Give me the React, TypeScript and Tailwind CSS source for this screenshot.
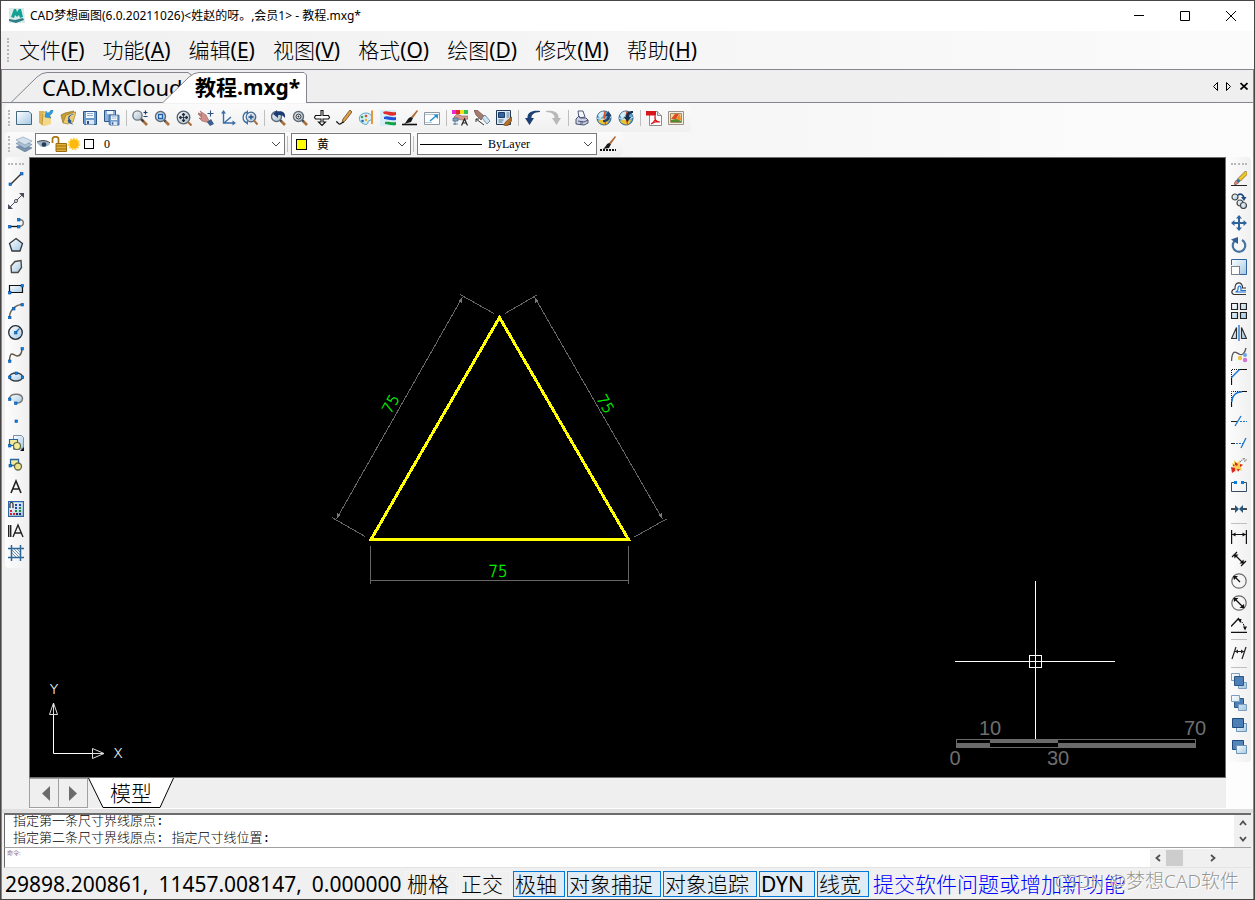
import type { ReactNode } from "react";
import clsx from "clsx";

type Tool = { label: string; art: ReactNode };

const menus = [
  { name: "文件", key: "F" },
  { name: "功能", key: "A" },
  { name: "编辑", key: "E" },
  { name: "视图", key: "V" },
  { name: "格式", key: "O" },
  { name: "绘图", key: "D" },
  { name: "修改", key: "M" },
  { name: "帮助", key: "H" }
];

const modes = [
  { name: "栅格", on: false, width: "w-[52px]" },
  { name: "正交", on: false, width: "w-[52px]" },
  { name: "极轴", on: true, width: "w-[52px]" },
  { name: "对象捕捉", on: true, width: "w-[94px]" },
  { name: "对象追踪", on: true, width: "w-[94px]" },
  { name: "DYN", on: true, width: "w-14" },
  { name: "线宽", on: true, width: "w-[52px]" }
];

// small blue grip squares used by the drawing tools
function Dots({ at }: { at: [number, number][] }) {
  return (
    <>
      {at.map(([x, y]) => (
        <rect
          key={`${x}-${y}`}
          x={x - 1}
          y={y - 1}
          width="2.5"
          height="2.5"
          fill="#0a84e8"
          stroke="#0a4f9c"
          strokeWidth=".6"
        />
      ))}
    </>
  );
}

function Lens({ children }: { children?: ReactNode }) {
  return (
    <>
      <path d="M10 10l2 2" stroke="#3b3f45" strokeWidth="2.4" />
      <path d="M11.5 11.5l3.5 3.5" stroke="#a8703c" strokeWidth="2.6" />
      <circle cx="6.5" cy="6.5" r="5" fill="url(#glass)" stroke="#5d6b78" strokeWidth="1.4" />
      {children}
    </>
  );
}

function Globe() {
  return (
    <>
      <circle cx="8" cy="8" r="7" fill="#5fa3d0" stroke="#2b5d86" />
      <path d="M2 5c2-4 6-4 7-3L7 6 4 9z" fill="#d3ebf7" />
      <path d="M2 11l5-3 6 2-2 4c-3 1-7 0-9-3z" fill="#e8c530" />
      <path d="M9 1c-1 5-1 10 1 14" stroke="#d6502c" strokeWidth="1.4" fill="none" />
      <path d="M1 8c4 2 9 2 14-1" stroke="#d9ecf7" fill="none" />
    </>
  );
}

function Floppy() {
  return (
    <>
      <path d="M1.5 1.5h13v13h-12l-1-1z" fill="#6d9bcb" stroke="#2d578c" />
      <path d="M4 2h8v6H4z" fill="#f4f8fc" />
      <path d="M5 3.5h6M5 5.5h6" stroke="#8fb0d2" />
      <path d="M4 10h8v4.5H4z" fill="#dbe7f3" />
      <path d="M5 11h2v3H5z" fill="#2d578c" />
    </>
  );
}

const fileTools: Tool[] = [
  {
    label: "新建",
    art: <path d="M.5 1.5h12.5l2.5 2.5v10.5h-15z" fill="url(#sky)" stroke="#42677f" />
  },
  {
    label: "打开",
    art: (
      <>
        <path d="M1 1h5l1 1v13H4l-3-2z" fill="#dcb552" />
        <path d="M5 3h8v11l-6 2H4z" fill="#f3d88b" />
        <path d="M4 15l1-11" stroke="#c4983a" />
        <path d="M15 0c0 3-2 5-4 5l2 3-6-1 1-6 1 2c2 0 3-1 4-3z" fill="#2f9bdc" stroke="#1a76b5" strokeWidth=".5" />
      </>
    )
  },
  {
    label: "打开图库",
    art: (
      <>
        <path d="M1 5l4-2 9-2-2 3-9 9z" fill="#c79d35" stroke="#8d6b1c" strokeWidth=".7" />
        <path d="M3 13l3-8 10-3-3 10-5 2z" fill="#f0cd6c" stroke="#a27c22" strokeWidth=".7" />
        <path d="M14 4c-4 0-7 2-6 6l-1-1 1 4 6 2-3-3 1-1-2-2c-1-2 1-4 4-4z" fill="#315a86" stroke="#f4f4f4" strokeWidth=".4" />
      </>
    )
  },
  { label: "保存", art: <Floppy /> },
  {
    label: "全部保存",
    art: (
      <>
        <path d="M.5.5h11v11H.5z" fill="#8fb3d8" stroke="#2d578c" />
        <path d="M3 1h6v3H3z" fill="#eef4fa" />
        <g transform="translate(4 4) scale(.76)">
          <Floppy />
        </g>
      </>
    )
  }
];

const viewTools: Tool[] = [
  {
    label: "缩放",
    art: (
      <>
        <path d="M9 9l6 6" stroke="#a8703c" strokeWidth="2.6" />
        <path d="M8.5 8.5l3 3" stroke="#3b3f45" strokeWidth="2" />
        <circle cx="5.5" cy="5.5" r="4.6" fill="url(#glass)" stroke="#6b7883" strokeWidth="1.4" />
        <path d="M11.5 2.5h4M13.5.5v4M11.5 6.5h4" stroke="#1e3f66" strokeWidth="1.2" />
      </>
    )
  },
  {
    label: "窗口缩放",
    art: (
      <Lens>
        <path d="M4.5 4.5h4v4h-4z" fill="#dcecfa" stroke="#1b5fae" strokeWidth="1.3" />
      </Lens>
    )
  },
  {
    label: "范围缩放",
    art: (
      <>
        <circle cx="7.5" cy="7.5" r="6.3" fill="url(#glass)" stroke="#55626e" strokeWidth="1.3" />
        <path d="M12 12l3.5 3.5" stroke="#a8703c" strokeWidth="2" />
        <path d="M3 7.5h9M7.5 3v9M3 7.5l2-1.5v3zM12 7.5l-2-1.5v3zM7.5 3L6 5h3zM7.5 12L6 10h3z" stroke="#1d2733" fill="#1d2733" strokeWidth=".8" />
      </>
    )
  },
  {
    label: "平移",
    art: (
      <>
        <path d="M0 3l4 1-2-3 6 4 2 4 3 4-5-1-4-1-3-3 3 0-4-4 4 2z" fill="#cf8f8a" stroke="#98605c" strokeWidth=".6" />
        <path d="M9 12l4-3 3 5-4 2z" fill="#3c5f8f" />
        <path d="M12.5.5v6M9.500 3.5h6" stroke="#2b5288" strokeWidth="1.1" />
      </>
    )
  },
  {
    label: "坐标系",
    art: (
      <>
        <path d="M3.5 2v11h10M4 13l7-6" stroke="#3a6ea8" strokeWidth="1.4" fill="none" />
        <path d="M3.5 0l2.5 3.5H1zM16 13l-3.500 2.5v-5z" fill="#3a6ea8" />
      </>
    )
  },
  {
    label: "动态缩放",
    art: (
      <>
        <path d="M4 2C0 5 0 11 5 13" stroke="#3a6ea8" strokeWidth="1.3" fill="none" />
        <path d="M6 0v4L3 3zM6 15v-4l-3 1z" fill="#3a6ea8" />
        <circle cx="9" cy="7" r="4.8" fill="url(#glass)" stroke="#41648c" strokeWidth="1.2" />
        <path d="M6.5 7h5M9 4.5v5" stroke="#1b4f92" strokeWidth="1.3" />
        <path d="M12 10.5l3.5 4" stroke="#a8703c" strokeWidth="2" />
      </>
    )
  }
];

const editTools: Tool[] = [
  {
    label: "上一视图",
    art: (
      <Lens>
        <path d="M15 8c1-5-3-8-8-6V0L3 4l5 4V5.500c3-1 5 0 7 2.500z" fill="#1c3c74" />
      </Lens>
    )
  },
  {
    label: "实时查看",
    art: (
      <Lens>
        <circle cx="6.5" cy="6.5" r="2.5" fill="#f0f0f0" stroke="#2e3338" />
        <circle cx="6.5" cy="6.5" r="1" fill="#2e3338" />
      </Lens>
    )
  },
  {
    label: "实时平移",
    art: (
      <path
        d="M7 .5h2v5h5.500l1 2-1 1.500H9v3h2.500L8 15.500 4.500 12H7V9H1.500l-1-1.500 1-2H7z"
        fill="#fff"
        stroke="#111"
        strokeWidth="1.1"
      />
    )
  },
  {
    label: "草图",
    art: (
      <>
        <path d="M14 0l2 2-7 9-3 2 1-4z" fill="#e2a04a" stroke="#5f431f" strokeWidth=".8" />
        <path d="M0 12c2-1 2 3 4 2s1-1 4-2" stroke="#111" strokeWidth="1.3" fill="none" />
      </>
    )
  },
  {
    label: "颜色",
    art: (
      <>
        <path d="M8 3c5 0 7 4 5 7-1 1-3 0-3 2s-1 3-4 2C-1 12 0 3 8 3z" fill="#d5eef7" stroke="#5ba6c8" />
        <circle cx="4" cy="7" r="1.3" fill="#3fa65a" />
        <circle cx="8" cy="6" r="1.3" fill="#d44c3a" />
        <circle cx="4.5" cy="11" r="1.3" fill="#2b64bd" />
        <circle cx="8" cy="10" r="1.2" fill="#e4b81e" />
        <path d="M13 1l2-1v14h-2z" fill="#e8963a" />
      </>
    )
  },
  {
    label: "图层",
    art: (
      <>
        <path d="M0 0h16v16H0z" fill="#d8edf5" />
        <path d="M3 2c4-2 7 1 13 0v3c-6 2-8-1-12-1z" fill="#e22b2b" />
        <path d="M4 7c4-2 6 1 12 0v3c-6 1-8-1-12-1z" fill="#1f52d8" />
        <path d="M5 12c4-1 6 1 11 0v3c-5 1-7-1-11-1z" fill="#15a043" />
      </>
    )
  },
  {
    label: "格式刷",
    art: (
      <>
        <path d="M15 0l1 1-5 7-2-1z" fill="#b26a33" />
        <path d="M9 7l2 1-2 4-7 2c3-2 3-6 7-7z" fill="#17191d" />
        <path d="M0 14.5h15" stroke="#111" strokeWidth="1.6" />
      </>
    )
  },
  {
    label: "视口",
    art: (
      <>
        <path d="M.5 2.5h15v12H.5z" fill="#fff" stroke="#8b99a6" />
        <path d="M1 4.5h14M1 12.5h7" stroke="#b9c4ce" />
        <path d="M6 11l6-5" stroke="#2092dc" strokeWidth="1.6" />
        <path d="M9.5 4.5H14V9z" fill="#2092dc" />
      </>
    )
  }
];

const styleTools: Tool[] = [
  {
    label: "文字样式",
    art: (
      <>
        <path d="M0 0h4v4H0z" fill="#e32bd0" />
        <path d="M4 0h4v4H4z" fill="#e62626" />
        <path d="M8 0h4v4H8z" fill="#f2df25" />
        <path d="M12 0h4v4h-4z" fill="#31c24a" />
        <path d="M5 4l5 2 6 0v3l-6 1-5-1-3-2z" fill="#d79a90" stroke="#8d5a52" strokeWidth=".6" />
        <path d="M1 8h5v3H1zM3 11v4M1 14h5" fill="#7fa6c9" stroke="#44698d" strokeWidth=".8" />
        <path d="M9.5 15.5L12.5 9l3 6.500M10.500 13h4" stroke="#222" strokeWidth="1.2" fill="none" />
      </>
    )
  },
  {
    label: "清理",
    art: (
      <>
        <path d="M0 0h3l7 6-3 4-5-5z" fill="#a77a70" stroke="#6d4a43" strokeWidth=".7" />
        <path d="M8 8l3-3 5 6-3 3z" fill="#cfe3f2" stroke="#5c7c96" strokeWidth=".8" />
        <path d="M2 9l8 6M2 9l0 3M2 9l3 0" stroke="#333" fill="none" />
      </>
    )
  },
  {
    label: "样式另存",
    art: (
      <>
        <path d="M.5.5h14v14H.5z" fill="#dce8f3" stroke="#203a58" />
        <path d="M2.5 2.5h6v5h-6z" fill="#33659e" stroke="#1b3c63" />
        <path d="M10.5 3h3M10.500 5h3M10.500 7h3M2.500 10h5M2.500 12h4" stroke="#55708c" />
        <path d="M15.500 7v4l-4 5-4-1 3-4z" fill="#b66f27" stroke="#7a4412" strokeWidth=".7" />
      </>
    )
  }
];

const historyTools: Tool[] = [
  {
    label: "撤销",
    art: <path d="M16 1C9 0 3 2 3.500 8H1l4.500 7L10 8H7.500C7 5 10 2 16 2z" fill="#1c3f74" />
  },
  {
    label: "重做",
    art: <path d="M0 1c7-1 13 1 12.500 7H15l-4.500 7L6 8h2.500C9 5 6 2 0 2z" fill="#b9b9b9" />
  }
];

const outputTools: Tool[] = [
  {
    label: "打印",
    art: (
      <>
        <path d="M4 1l5 0 2 6-6 1z" fill="#f2f4f9" stroke="#535b7c" />
        <path d="M2 9l3-3 1 2h6l2 2v3l-4 2-8-1z" fill="#ccd2e2" stroke="#474f70" />
        <path d="M4 11l6 1 4-2M6 13h3" stroke="#474f70" fill="none" />
      </>
    )
  },
  {
    label: "网络打开",
    art: (
      <>
        <Globe />
        <path d="M7 12c5 0 7-2 7-6h1.500L12.500 1 9 6h2.500c0 2-2 4-4.500 4z" fill="#22456f" />
      </>
    )
  },
  {
    label: "网络保存",
    art: (
      <>
        <Globe />
        <path d="M15 1C10 1 8 3 8 7H6l3.500 5L13 7h-2c0-2 1-4 4-4z" fill="#17304f" />
      </>
    )
  }
];

const exportTools: Tool[] = [
  {
    label: "输出PDF",
    art: (
      <>
        <path d="M3.5 1.5h8l4 4v10h-12z" fill="#fff" stroke="#8c8c8c" />
        <path d="M11.5 1.5v4h4" fill="#ddd" stroke="#8c8c8c" />
        <path d="M0 1h10v4.500H0z" fill="#d9151c" />
        <path d="M5 14c3-2 5-5 4-8-1 4 2 6 5 6-3-1-6 0-9 2z" fill="none" stroke="#d9151c" strokeWidth="1.1" />
      </>
    )
  },
  {
    label: "输出图片",
    art: (
      <>
        <path d="M.5 1.5h15v13H.5z" fill="#f2eee8" stroke="#9b9389" />
        <path d="M2.5 3.5h11v9h-11z" fill="#f1d9a4" stroke="#a78d5f" />
        <path d="M3 9l4-5 4 0-3 5z" fill="#dd4a25" />
        <path d="M8 9l4-5 1 6-3 1z" fill="#ef8c22" />
        <path d="M3 10l5-1 5 2v1H3z" fill="#4e8d32" />
      </>
    )
  }
];

const brush = (
  <>
    <path d="M15 0l1 1-5 7-2-1z" fill="#b26a33" />
    <path d="M9 7l2 1-2 4-6 1c3-2 3-5 6-6z" fill="#17191d" />
    <path d="M0 14h16" stroke="#111" strokeWidth="2" strokeDasharray="2 1" />
  </>
);

const drawTools: Tool[] = [
  {
    label: "直线",
    art: (
      <>
        <path d="M2.5 13.5l11-11" stroke="#37342c" strokeWidth="1.4" />
        <Dots at={[[2, 13], [13.5, 2.5]]} />
      </>
    )
  },
  {
    label: "构造线",
    art: (
      <>
        <path d="M1 15L15 1" stroke="#4c4a5c" />
        <path d="M0 16v-5l5 5zM16 0v5l-5-5z" fill="#4c4a5c" />
        <circle cx="8" cy="8" r="1.5" fill="#fff" stroke="#4c4a5c" />
      </>
    )
  },
  {
    label: "多段线",
    art: (
      <>
        <path d="M1 11.5h10" stroke="#111" strokeWidth="1.3" />
        <path d="M10 4.5c7-1 7 7 1 7" stroke="#7b7b7b" strokeWidth="1.5" fill="none" />
        <Dots at={[[1.5, 11.5], [10.5, 4.5], [10.5, 11.5]]} />
      </>
    )
  },
  {
    label: "正多边形",
    art: <path d="M8 1.5l6.500 5-2.500 7.500H4L1.500 6.500z" fill="url(#sky)" stroke="#333a40" strokeWidth="1.3" />
  },
  {
    label: "面域",
    art: <path d="M7 2.500l6-1 .5 7L10 13.500H3.500L3 7z" fill="url(#sky)" stroke="#4b4b4b" strokeWidth="1.4" />
  },
  {
    label: "矩形",
    art: (
      <>
        <path d="M1.5 4.5h13v7h-13z" fill="url(#sky)" stroke="#111" strokeWidth="1.2" />
        <Dots at={[[1.5, 11.5], [14, 4.5]]} />
      </>
    )
  },
  {
    label: "圆弧",
    art: (
      <>
        <path d="M1.5 14C2 7 7 2 14 1.500" stroke="#6b6357" strokeWidth="1.5" fill="none" />
        <Dots at={[[1.5, 14.5], [5.5, 5.5], [14, 1.5]]} />
      </>
    )
  },
  {
    label: "圆",
    art: (
      <>
        <circle cx="7.5" cy="7.5" r="6.8" fill="url(#sky)" stroke="#222a33" strokeWidth="1.3" />
        <path d="M7.5 7.5l4-4" stroke="#2b6cab" strokeWidth="1.3" />
        <Dots at={[[7.5, 7.5]]} />
      </>
    )
  },
  {
    label: "样条曲线",
    art: (
      <>
        <path d="M1.5 14C2 2 6 9 9 9s5-2 5-8" stroke="#5e5748" strokeWidth="1.4" fill="none" />
        <Dots at={[[1.5, 14], [14, 1.5]]} />
      </>
    )
  },
  {
    label: "椭圆",
    art: (
      <>
        <ellipse cx="8" cy="8" rx="6.5" ry="4" fill="url(#sky)" stroke="#37424c" strokeWidth="1.4" />
        <Dots at={[[1.5, 8], [14.5, 8], [8, 4]]} />
      </>
    )
  },
  {
    label: "椭圆弧",
    art: (
      <>
        <path d="M1.5 7C3 2 14 2 14.500 7.500c0 3-3 5-7 4.500" stroke="#777" strokeWidth="1.5" fill="url(#sky)" />
        <Dots at={[[1.5, 8], [7.5, 12]]} />
      </>
    )
  },
  { label: "点", art: <Dots at={[[8, 8]]} /> },
  {
    label: "创建块",
    art: (
      <>
        <path d="M5.5.5h8l2 2v10l-4 2h-6z" fill="url(#sky)" stroke="#7591a8" />
        <path d="M1.5 4.5h8v6h-8z" fill="#f3ea9c" stroke="#29629d" strokeWidth="1.2" />
        <circle cx="9" cy="11" r="3.5" fill="#f3ea9c" stroke="#626744" strokeWidth="1.2" />
        <path d="M16 12v4h-4z" fill="#111" />
        <Dots at={[[1.5, 10.5]]} />
      </>
    )
  },
  {
    label: "插入块",
    art: (
      <>
        <path d="M2.5 2.5h8v6h-8z" fill="#f3ea9c" stroke="#29629d" strokeWidth="1.3" />
        <circle cx="10" cy="9.5" r="3.5" fill="#e8e38d" stroke="#626744" strokeWidth="1.3" />
        <Dots at={[[2, 8.5]]} />
      </>
    )
  },
  {
    label: "单行文字",
    art: <path d="M3 14L8 2l5 12M5 10h6" stroke="#222" strokeWidth="1.6" fill="none" />
  },
  {
    label: "图案填充",
    art: (
      <>
        <path d="M.5.5h15v15H.5z" fill="url(#sky)" stroke="#2d68a8" strokeWidth="1.3" />
        <path d="M2 7V3c0-2 3-2 3 0v4" stroke="#222" strokeWidth="1.2" fill="none" />
        <path d="M7 4h2M11 4h2M7 7h2" stroke="#1f3fc2" strokeWidth="2" />
        <path d="M11 7h2M7 10h2M11 10h2" stroke="#1d8b3a" strokeWidth="2" />
        <path d="M2 10h2M2 13h2M5 13h2" stroke="#e52222" strokeWidth="2" />
        <path d="M8 13h2M11 13h2" stroke="#252a72" strokeWidth="2" />
      </>
    )
  },
  {
    label: "多行文字",
    art: (
      <path d="M.7 2v12M2.7 2v12M5 14l5-12 5 12M7 10h6" stroke="#222" strokeWidth="1.4" fill="none" />
    )
  },
  {
    label: "剖面线",
    art: (
      <>
        <path d="M3.5 0v16M12.500 0v16M0 3.500h16M0 12.500h16" stroke="#2d6698" strokeWidth="1.5" />
        <path d="M4 8l4 4M4 5l7 7M6 4l6 6M9 4l3 3" stroke="#6c8fae" />
      </>
    )
  }
];

const modifyTools: Tool[] = [
  {
    label: "删除",
    art: (
      <>
        <path d="M0 14.5h16" stroke="#222" />
        <path d="M14.500 0L16 1.500v2L9.500 10 7 7.500z" fill="#f0c52b" stroke="#80671a" strokeWidth=".8" />
        <path d="M7 7.500L9.500 10l-2 2L5 9.500z" fill="#3377a8" />
        <path d="M5 9.500L7.500 12 5 13.500H3.500V12z" fill="#e58d7b" stroke="#824a40" strokeWidth=".7" />
      </>
    )
  },
  {
    label: "复制",
    art: (
      <>
        <circle cx="4" cy="4" r="3" fill="url(#sky)" stroke="#444" strokeWidth="1.2" />
        <circle cx="9" cy="10" r="3" fill="url(#sky)" stroke="#444" strokeWidth="1.2" />
        <circle cx="12.5" cy="12.5" r="3" fill="url(#sky)" stroke="#444" strokeWidth="1.2" />
        <path d="M7 2c3-2 6 0 6 4" stroke="#1e4a80" strokeWidth="1.6" fill="none" />
        <path d="M10 4h5.500L13 8z" fill="#1e4a80" />
      </>
    )
  },
  {
    label: "移动",
    art: (
      <>
        <path d="M8 2v12M2 8h12" stroke="#2f659c" strokeWidth="2" />
        <path d="M8 0l3 3.500H5zM8 16l3-3.500H5zM0 8l3.500-3v6zM16 8l-3.500-3v6z" fill="#2f659c" />
      </>
    )
  },
  {
    label: "旋转",
    art: (
      <>
        <path d="M5 3a6.3 6.3 0 1 0 6 0" stroke="#4573a3" strokeWidth="2.2" fill="none" />
        <path d="M0 2.500L7 0v7z" fill="#2f5f94" />
      </>
    )
  },
  {
    label: "缩放对象",
    art: (
      <>
        <path d="M.5.5h15v15H.5z" fill="url(#sky)" />
        <path d="M.5 6V.5h15v15H9" fill="none" stroke="#2f659c" />
        <path d="M.5 7.5h8v8h-8z" fill="#fff" stroke="#111" strokeDasharray="1 1" />
      </>
    )
  },
  {
    label: "偏移",
    art: (
      <>
        <path d="M15 13.500H3c-3-1-3-5 1-5.500C3 0 12 0 11.500 7H15" fill="none" stroke="#333" strokeWidth="1.2" />
        <path d="M15 11H5c0-1 2 0 2-3 0-4 3-4 3 0v1.500h5" fill="none" stroke="#1a73cf" strokeWidth="1.2" />
      </>
    )
  },
  {
    label: "阵列",
    art: (
      <path
        d="M.5.5h6v6h-6zM9.500.5h6v6h-6zM.5 9.500h6v6h-6zM9.500 9.500h6v6h-6z"
        fill="url(#sky)"
        stroke="#222"
        strokeWidth="1.2"
      />
    )
  },
  {
    label: "镜像",
    art: (
      <>
        <path d="M5.5 2.5v11h-5zM10.500 2.500v11h5z" fill="url(#sky)" stroke="#333" strokeWidth="1.2" />
        <path d="M8 0v16" stroke="#1a73cf" strokeWidth="1.3" />
      </>
    )
  },
  {
    label: "编辑曲线",
    art: (
      <>
        <path d="M.5 14C1 2 5 5 8 7s6-1 7-6" stroke="#555" strokeWidth="1.3" fill="none" />
        <circle cx="9" cy="11" r="2.2" fill="#eac44a" />
        <circle cx="14" cy="8" r="2" fill="#6ca6e8" />
        <circle cx="14" cy="13" r="2.2" fill="#d672d8" />
      </>
    )
  },
  {
    label: "倒角",
    art: (
      <>
        <path d="M.5 8V.5H9" stroke="#111" strokeDasharray="1 1" fill="none" />
        <path d="M.5 16V8.500M8 .5h8" stroke="#111" strokeWidth="1.2" />
        <path d="M.5 8.500l8-8" stroke="#1a73cf" strokeWidth="1.4" />
      </>
    )
  },
  {
    label: "圆角",
    art: (
      <>
        <path d="M.5 9V.5H10" stroke="#111" strokeDasharray="1 1" fill="none" />
        <path d="M.5 16v-5M11 .5h5" stroke="#111" strokeWidth="1.2" />
        <path d="M.7 11C1 5 5 1 11 .7" stroke="#1a73cf" strokeWidth="1.7" fill="none" />
      </>
    )
  },
  {
    label: "修剪",
    art: (
      <>
        <path d="M0 8.500h6" stroke="#222" />
        <path d="M9 8.500h7" stroke="#1a73cf" strokeDasharray="2 1" />
        <path d="M4 13l6-10" stroke="#1a73cf" strokeWidth="1.3" />
      </>
    )
  },
  {
    label: "延伸",
    art: (
      <>
        <path d="M0 8.500h4" stroke="#222" />
        <path d="M5 8.500h7" stroke="#1a73cf" strokeDasharray="2 1" />
        <path d="M10 13l5-10" stroke="#1a73cf" strokeWidth="1.3" />
      </>
    )
  },
  {
    label: "分解",
    art: (
      <>
        <path d="M9 5l4-4 1 3 2-2" stroke="#777" strokeWidth="1.3" strokeDasharray="1 1" fill="none" />
        <path d="M1 6l2 1 0-4 3 3 3-3 0 4 3 0-2 3 1 4-4-2-3 3-1-3-2 1 1-3z" fill="#f6cf52" />
        <path d="M0 10l4 1 0 3-3 2zM4 5l3 2-1 2-2-1zM9 7l3 1-3 2zM6 12l3 0-2 3zM2 7l2 2-2 0z" fill="#da2525" />
      </>
    )
  },
  {
    label: "打断",
    art: (
      <>
        <path d="M5 3.500H.5v9h15v-9H11" fill="none" stroke="#384b61" />
        <path d="M3 2h3v3H3zM10 2h3v3h-3z" fill="#0a7be0" />
      </>
    )
  },
  {
    label: "合并",
    art: (
      <>
        <path d="M0 8h5M11 8h5" stroke="#111" strokeWidth="1.5" />
        <path d="M4 4l4 4-4 4zM12 4L8 8l4 4z" fill="#25567f" />
      </>
    )
  }
];

const dimTools: Tool[] = [
  {
    label: "线性标注",
    art: (
      <>
        <path d="M.6 1v14M15.4 1v14M1 5.500h14" stroke="#111" strokeWidth="1.2" />
        <path d="M1 5.500L4.500 3.500v4zM15 5.500l-3.500-2v4z" fill="#111" />
      </>
    )
  },
  {
    label: "对齐标注",
    art: (
      <>
        <path d="M1 6l5-5M10 15l5-5M3.500 3.500l9 9" stroke="#111" strokeWidth="1.2" />
        <path d="M3 3.500h4.500L3.500 7.500zM13 12.500H8.500l4-4z" fill="#111" />
      </>
    )
  },
  {
    label: "半径标注",
    art: (
      <>
        <circle cx="8" cy="8" r="7.200" fill="none" stroke="#6b6b6b" strokeWidth="1.2" />
        <path d="M3 3l6 6" stroke="#111" strokeWidth="1.3" />
        <path d="M2 3l5 0-4 4z" fill="#111" />
      </>
    )
  },
  {
    label: "直径标注",
    art: (
      <>
        <circle cx="8" cy="8" r="7.200" fill="none" stroke="#6b6b6b" strokeWidth="1.2" />
        <path d="M3 3l10 10" stroke="#111" strokeWidth="1.3" />
        <path d="M2.5 3l5 0-4.500 4zM13.500 13l-5 0 4.500-4z" fill="#111" />
      </>
    )
  },
  {
    label: "角度标注",
    art: (
      <>
        <path d="M0 15.300h16M0 9.500l8-8.500" stroke="#111" strokeWidth="1.3" />
        <path d="M8 3c4 2 5 5 6 9" stroke="#111" strokeDasharray="2 1" fill="none" />
        <path d="M6.500 2l4 0-1 4zM12 9.500h4l-2 4z" fill="#111" />
      </>
    )
  }
];

const editDimTools: Tool[] = [
  {
    label: "编辑标注",
    art: (
      <>
        <path d="M1 14L5 2M11 14l4-12M4 6.500h9" stroke="#222" strokeWidth="1.2" />
        <path d="M4 6.500l3-2v4zM13 6.500l-3-2v4z" fill="#222" />
      </>
    )
  }
];

const orderTools: Tool[] = [
  {
    label: "前置",
    art: (
      <>
        <path d="M.5.5h8v7h-8zM7.500 9.500h8v6h-8z" fill="url(#sky)" stroke="#7d9fbd" />
        <path d="M3.5 3.5h9v9h-9z" fill="#4b7fb6" stroke="#2b5786" />
      </>
    )
  },
  {
    label: "后置",
    art: (
      <>
        <path d="M3.5 3.5h9v9h-9z" fill="#4b7fb6" stroke="#2b5786" />
        <path d="M.5.5h8v6h-8zM7.500 9.500h8v6h-8z" fill="url(#sky)" stroke="#7d9fbd" />
      </>
    )
  },
  {
    label: "置于对象之上",
    art: (
      <>
        <path d="M5.5 6.5h10v8h-10z" fill="url(#sky)" stroke="#6d93b5" />
        <path d="M1.5 1.5h11v9h-11z" fill="#4b7fb6" stroke="#1f4c7c" />
      </>
    )
  },
  {
    label: "置于对象之下",
    art: (
      <>
        <path d="M1.5 1.5h11v9h-11z" fill="#5486bb" stroke="#1f4c7c" />
        <path d="M5.5 6.5h10v8h-10z" fill="url(#sky)" stroke="#6d93b5" />
      </>
    )
  }
];

const layerIcon = (
  <>
    <path d="M0 11l7-3 9 4-7 4z" fill="#7892ae" stroke="#5b7590" strokeWidth=".5" />
    <path d="M0 7.500l7-3 9 4-7 4z" fill="#a9bfd4" stroke="#5b7590" strokeWidth=".5" />
    <path d="M0 4l7-3 9 4-7 4z" fill="#d3e1ee" stroke="#6d88a3" strokeWidth=".5" />
  </>
);

function Icon({ children }: { children: ReactNode }) {
  return (
    <svg viewBox="0 0 16 16" className="size-4 shrink-0" aria-hidden>
      {children}
    </svg>
  );
}

function ToolButton({ tool }: { tool: Tool }) {
  return (
    <button
      type="button"
      aria-label={tool.label}
      className="grid size-[22px] shrink-0 place-items-center hover:bg-sky-100"
    >
      <Icon>{tool.art}</Icon>
    </button>
  );
}

function ToolGroups({ groups, vertical }: { groups: Tool[][]; vertical?: boolean }) {
  return groups.map((group, i) => (
    <div key={group[0].label} className={clsx("flex items-center", vertical && "flex-col")}>
      {i > 0 && (
        <span
          className={clsx(
            "flex items-center justify-center",
            vertical ? "h-1.5 w-4" : "h-4 w-1.5"
          )}
        >
          <span className={clsx("bg-[#bfbfbf]", vertical ? "h-px w-full" : "h-full w-px")} />
        </span>
      )}
      {group.map((tool) => (
        <ToolButton key={tool.label} tool={tool} />
      ))}
    </div>
  ));
}

function Grip({ vertical, className }: { vertical?: boolean; className?: string }) {
  return (
    <span
      aria-hidden
      className={clsx(
        "shrink-0",
        vertical
          ? "h-0 w-4 border-t-2 border-dotted border-[#b8b8b8]"
          : "w-0 border-l-2 border-dotted border-[#b8b8b8]",
        className
      )}
    />
  );
}

function Combo({
  label,
  value,
  className,
  children,
  serif
}: {
  label: string;
  value: string;
  className: string;
  children: ReactNode;
  serif?: boolean;
}) {
  return (
    <div className={clsx("flex h-[22px] items-center border border-[#7a7a7a] bg-white", className)}>
      {children}
      <select
        aria-label={label}
        defaultValue={value}
        className={clsx(
          "h-full min-w-0 flex-1 appearance-none bg-transparent text-xs outline-none",
          serif
            ? "font-['Liberation_Serif','Noto_Sans_CJK_SC',serif]"
            : "font-['Noto_Sans_CJK_SC',sans-serif]"
        )}
      >
        <option>{value}</option>
      </select>
      <svg viewBox="0 0 10 6" className="mr-[3px] h-1.5 w-2.5 shrink-0" aria-hidden>
        <path d="M1 1l4 4 4-4" fill="none" stroke="#444" />
      </svg>
    </div>
  );
}

function TitleBar() {
  return (
    <header className="flex h-[30px] items-center bg-white pl-2">
      <svg viewBox="0 0 16 16" className="size-4" aria-hidden>
        <path d="M0 0h15l1 15H0z" fill="#dcebea" />
        <path d="M5 1h2l1 3 2-3h2l2 8-3 1-1-3-2 2-2-2-1 3-3-1z" fill="#12a192" />
        <path d="M0 11l6 1 8-2 1 2-8 3-7-2z" fill="#2d7d88" />
      </svg>
      <h1 className="ml-[5px] flex-1 truncate text-xs leading-4">
        CAD梦想画图(6.0.20211026)&lt;姓赵的呀。,会员1&gt; - 教程.mxg*
      </h1>
      <button type="button" aria-label="最小化" className="grid h-full w-[46px] place-items-center">
        <svg viewBox="0 0 10 10" className="size-2.5">
          <path d="M0 4.500h10" stroke="#000" />
        </svg>
      </button>
      <button type="button" aria-label="最大化" className="grid h-full w-[46px] place-items-center">
        <svg viewBox="0 0 10 10" className="size-2.5">
          <path d="M.5.5h9v9h-9z" fill="none" stroke="#000" />
        </svg>
      </button>
      <button type="button" aria-label="关闭" className="grid h-full w-[46px] place-items-center">
        <svg viewBox="0 0 10 10" className="size-2.5">
          <path d="M0 0l10 10M10 0L0 10" stroke="#000" />
        </svg>
      </button>
    </header>
  );
}

function MenuBar() {
  return (
    <nav className="flex h-[38px] items-center bg-linear-to-r from-[#f0f0f0] to-[#fbfbfb] pl-1.5">
      <Grip className="h-6" />
      <ul className="ml-2.5 flex gap-[18px] text-[21px] leading-7 font-light">
        {menus.map((menu) => (
          <li key={menu.key}>
            <button type="button" className="whitespace-nowrap">
              {menu.name}
              <span className="font-normal">
                (<span className="underline decoration-1 underline-offset-2">{menu.key}</span>)
              </span>
            </button>
          </li>
        ))}
      </ul>
    </nav>
  );
}

function DocumentTabs() {
  return (
    <div className="flex h-[34px] items-end border-y border-[#85858f] bg-[#efefef] pl-2">
      <button type="button" className="-mb-px grid h-[31px] w-[184px] shrink-0">
        <svg viewBox="0 0 184 31" className="[grid-area:1/1]" aria-hidden>
          <path d="M1 30.500L27 5Q32 .5 37 .5H178l4 3" fill="none" stroke="#85858f" />
        </svg>
        <span className="pl-8 text-left text-[22px] leading-[31px] [grid-area:1/1]">
          CAD.MxCloud
        </span>
      </button>
      <button
        type="button"
        className="relative -mb-px -ml-8 grid h-[31px] w-[145px] shrink-0"
      >
        <svg viewBox="0 0 145 31" className="[grid-area:1/1]" aria-hidden>
          <path d="M0 31L1 30.500 27 5Q32 .5 37 .5H142l2.500 2.500V31z" fill="#fff" />
          <path d="M1 30.500L27 5Q32 .5 37 .5H142l2.500 2.500V31" fill="none" stroke="#85858f" />
        </svg>
        <span className="pl-[33px] text-left text-[21px] leading-[31px] font-bold [grid-area:1/1]">
          教程.mxg*
        </span>
      </button>
      <div className="mr-[5px] ml-auto flex items-center gap-2 self-center">
        <button type="button" aria-label="向左">
          <svg viewBox="0 0 6 9" className="h-[9px] w-1.5">
            <path d="M5.5.5v8l-4-4z" fill="none" stroke="#000" />
          </svg>
        </button>
        <button type="button" aria-label="向右">
          <svg viewBox="0 0 6 9" className="h-[9px] w-1.5">
            <path d="M.5.5v8l4-4z" fill="none" stroke="#000" />
          </svg>
        </button>
        <button type="button" aria-label="关闭文档">
          <svg viewBox="0 0 8 8" className="size-2">
            <path d="M.5 1l7 6.500M7.500 1L.5 7.500" stroke="#000" strokeWidth="1.7" />
          </svg>
        </button>
      </div>
    </div>
  );
}

function Toolbars() {
  return (
    <div className="flex flex-col items-start bg-linear-to-r from-[#f0f0f0] to-[#fcfcfc] py-px pl-[3px]">
      <div className="flex h-7 items-center rounded bg-linear-to-b from-[#fbfbfb] to-[#f0f0f0] px-1">
        <Grip className="-ml-px mr-[3px] h-4" />
        <ToolGroups
          groups={[
            fileTools,
            viewTools,
            editTools,
            styleTools,
            historyTools,
            outputTools,
            exportTools
          ]}
        />
      </div>
      <div className="flex h-6 items-center rounded bg-linear-to-b from-[#fbfbfb] to-[#f0f0f0] px-1">
        <Grip className="-ml-px mr-[3px] h-4" />
        <ToolButton tool={{ label: "图层管理", art: layerIcon }} />
        <Combo label="图层" value="0" serif className="w-[250px]">
          <span className="mr-2.5 ml-px flex items-center">
            <svg viewBox="0 0 14 16" className="h-4 w-3.5" aria-hidden>
              <path d="M0 7c3-3 10-3 13 1-2 3-8 4-10 2z" fill="#9fb3c6" />
              <path d="M0 6c4-2 10-2 13 1" stroke="#333" fill="none" />
              <circle cx="7" cy="8.5" r="2.3" fill="#263d57" />
            </svg>
            <svg viewBox="0 0 16 16" className="size-4" aria-hidden>
              <path d="M1.5 7V3c0-3 6-3 6 0v5" fill="none" stroke="#a87a1a" strokeWidth="1.8" />
              <path d="M5 7.500h10.500v8H5z" fill="#e2ae33" stroke="#9a6d12" />
              <path d="M5 10h10M5 13h10" stroke="#9a6d12" />
            </svg>
            <svg viewBox="0 0 14 14" className="size-3.5" aria-hidden>
              <circle cx="7" cy="7" r="5.5" fill="none" stroke="#f7d75c" strokeWidth="1.6" strokeDasharray="2 1" />
              <circle cx="7" cy="7" r="4.800" fill="#ffb90a" />
            </svg>
            <span className="ml-[3px] size-2.5 border border-black bg-white" />
          </span>
        </Combo>
        <span className="mx-0.5 h-4 w-0.5 border-l border-[#bfbfbf]" />
        <Combo label="颜色" value="黄" className="w-[120px]">
          <span className="mr-2.5 ml-1 size-[11px] border border-black bg-[#ff0]" />
        </Combo>
        <span className="mx-0.5 h-4 w-0.5 border-l border-[#bfbfbf]" />
        <Combo label="线型" value="ByLayer" serif className="w-[180px]">
          <span className="mr-1.5 ml-0.5 h-px w-[62px] bg-black" />
        </Combo>
        <ToolButton tool={{ label: "特性匹配", art: brush }} />
      </div>
    </div>
  );
}

function Drawing() {
  return (
    <div className="relative min-h-0 flex-1 overflow-hidden border border-[#6f6f6f] bg-black">
      <svg className="absolute inset-0 h-full w-full" shapeRendering="crispEdges">
        <g fill="none" stroke="#666">
          <path d="M340.5 388v38M598.500 388v38M340.500 422.500h258" />
          <path d="M430 136.500l34 19M302 359.500l33 19M432.500 139l-126 222" />
          <path d="M475 155.500l32-18.500M604.500 379l32-18M504.500 139l128 222" />
        </g>
        <path
          d="M432.500 139l-1 6-3-2zM306.500 361l1-6 3 2zM504.500 139l1 6 3-2zM632.500 361l-1-6-3 2z"
          fill="#777"
        />
        <path d="M469.500 159.500L341 381.500h257.500z" fill="none" stroke="#ff0" strokeWidth="3" />
        <g
          fill="#0f0"
          stroke="#0f0"
          strokeWidth=".3"
          textAnchor="middle"
          className="font-['DejaVu_Sans_Light','DejaVu_Sans',sans-serif] text-[15px] font-extralight"
        >
          <text x="468" y="419">75</text>
          <text x="361" y="251" transform="rotate(-60 361 246)">75</text>
          <text x="575" y="251" transform="rotate(60 575 246)">75</text>
        </g>
      </svg>

      {/* UCS */}
      <svg viewBox="0 0 110 110" className="absolute bottom-0 left-0 size-[110px]">
        <path d="M23.5 47v39.500H62" fill="none" stroke="#fff" />
        <path d="M23.5 36l4 11.500h-8zM23.500 36v11M74 86.500l-11.500-5v10zM74 86.500H62" fill="none" stroke="#ddd" />
        <g
          fill="#fff"
          stroke="#fff"
          strokeWidth=".2"
          textAnchor="middle"
          className="font-['DejaVu_Sans_Light','DejaVu_Sans',sans-serif] text-sm font-extralight"
        >
          <text x="24" y="27">Y</text>
          <text x="88" y="91">X</text>
        </g>
      </svg>

      {/* crosshair and scale bar */}
      <svg
        viewBox="0 0 275 200"
        className="absolute right-0 bottom-0 h-[200px] w-[275px]"
        shapeRendering="crispEdges"
      >
        <path d="M5 84.500h160M85.500 4v159M79.500 78.500h12v12h-12z" fill="none" stroke="#fff" />
        <path d="M6.500 162.500h239v8H6.500z" fill="none" stroke="#6a6a6a" />
        <path d="M6 166h34v4H6zM40 162h68v4H40zM108 166h138v4H108z" fill="#6a6a6a" />
        <g
          fill="#6e6e6e"
          textAnchor="middle"
          className="font-['Liberation_Sans',sans-serif] text-xl"
        >
          <text x="40" y="158">10</text>
          <text x="245" y="158">70</text>
          <text x="5" y="188">0</text>
          <text x="108" y="188">30</text>
        </g>
      </svg>
    </div>
  );
}

function ModelTabs() {
  return (
    <div className="flex h-[31px] shrink-0 border-b border-white bg-[#efefef]">
      <button
        type="button"
        aria-label="上一页"
        className="grid w-[30px] place-items-center border border-[#a0a0a0] pl-1"
      >
        <svg viewBox="0 0 8 15" className="h-[15px] w-2">
          <path d="M8 0v15L0 7.500z" fill="#6b6b6b" />
        </svg>
      </button>
      <button
        type="button"
        aria-label="下一页"
        className="-ml-px grid w-[30px] place-items-center border border-[#a0a0a0] pr-px"
      >
        <svg viewBox="0 0 8 15" className="h-[15px] w-2">
          <path d="M0 0v15l8-7.500z" fill="#6b6b6b" />
        </svg>
      </button>
      <button type="button" className="grid w-[86px]">
        <svg viewBox="0 0 86 30" className="h-[30px] [grid-area:1/1]" aria-hidden>
          <path d="M.5 0L15 29.500h57L85.500 0z" fill="#fff" />
          <path d="M.5 0L15 29.500h57L85.500 0" fill="none" stroke="#000" />
        </svg>
        <span className="text-[21px] leading-[30px] font-light [grid-area:1/1]">模型</span>
      </button>
    </div>
  );
}

function Chevron({ d }: { d: string }) {
  return (
    <svg viewBox="0 0 8 8" className="size-2" aria-hidden>
      <path d={d} fill="none" stroke="#505050" strokeWidth="1.8" />
    </svg>
  );
}

function CommandPanel() {
  return (
    <section className="border-t-4 border-[#e0e0e0] px-0.5">
      <div className="flex h-[35px] border-t-2 border-b border-l border-t-[#6b6b6b] border-b-[#a0a0a0] border-l-[#6b6b6b] bg-white">
        <div className="flex-1 overflow-hidden pl-2 font-['Liberation_Mono','Noto_Sans_CJK_SC',monospace] text-[13px] font-light">
          <p className="h-4 leading-[14px]">指定第一条尺寸界线原点:</p>
          <p className="h-4 leading-4">指定第二条尺寸界线原点: 指定尺寸线位置:</p>
        </div>
        <div className="flex w-[17px] flex-col items-center justify-around bg-[#f0f0f0]">
          <button type="button" aria-label="向上滚动">
            <Chevron d="M1 6l3-3.500L7 6" />
          </button>
          <button type="button" aria-label="向下滚动">
            <Chevron d="M1 2l3 3.500L7 2" />
          </button>
        </div>
      </div>
      <div className="flex h-5 border-b border-l border-b-[#e3e3e3] border-l-[#6b6b6b] bg-white">
        <label htmlFor="command" className="pl-0.5 text-[6px] leading-[10px] text-[#8a6a86]">
          命令:
        </label>
        <input id="command" className="min-w-0 flex-1 bg-transparent text-xs outline-none" />
        <div className="mt-px flex w-[71px] items-center bg-[#f0f0f0]">
          <button type="button" aria-label="向左滚动" className="grid w-4 place-items-center">
            <Chevron d="M6 1L2.500 4 6 7" />
          </button>
          <span className="h-4 w-[17px] bg-[#cdcdcd]" />
          <button type="button" aria-label="向右滚动" className="ml-auto grid w-4 place-items-center">
            <Chevron d="M2 1l3.500 3L2 7" />
          </button>
        </div>
        <span className="w-[30px] bg-[#f0f0f0]" />
      </div>
    </section>
  );
}

function StatusBar() {
  return (
    <footer className="relative flex h-[31px] items-center gap-0.5 bg-[#f0f0f0] pl-[3px] text-[21px] leading-6">
      <output className="flex w-[398px] gap-2.5 whitespace-nowrap">
        <span>29898.200861,</span>
        <span>11457.008147,</span>
        <span>0.000000</span>
      </output>
      {modes.map((mode) => (
        <button
          key={mode.name}
          type="button"
          aria-pressed={mode.on}
          className={clsx(
            "h-[26px] border pl-px text-left whitespace-nowrap",
            mode.name === "DYN" ? "font-normal" : "font-light",
            mode.width,
            mode.on ? "border-[#0078d7] bg-[#dfebf5]" : "border-[#f4f4f4]"
          )}
        >
          {mode.name}
        </button>
      ))}
      <a href="#feedback" className="pl-0.5 font-light whitespace-nowrap text-[#00f]">
        提交软件问题或增加新功能
      </a>
      <span className="pointer-events-none absolute right-3.5 bottom-1.5 text-[19px] leading-6 font-light whitespace-nowrap text-[#858585]/85 [text-shadow:1px_1px_0_#fff]">
        CSDN @梦想CAD软件
      </span>
    </footer>
  );
}

export default function App() {
  return (
    <div className="flex h-screen flex-col border border-[#4a4545] bg-[#f0f0f0] font-['Noto_Sans','Noto_Sans_CJK_SC',sans-serif] text-black">
      <svg className="absolute size-0" aria-hidden>
        <defs>
          <linearGradient id="sky" x1="0" y1="0" x2="1" y2="1">
            <stop offset="0" stopColor="#fff" />
            <stop offset="1" stopColor="#a3c8e4" />
          </linearGradient>
          <linearGradient id="glass" x1="0" y1="0" x2="1" y2="1">
            <stop offset="0" stopColor="#f7fbfd" />
            <stop offset="1" stopColor="#a9bccb" />
          </linearGradient>
        </defs>
      </svg>
      <TitleBar />
      <MenuBar />
      <div className="flex min-h-0 flex-1 flex-col border-x border-[#85858f]">
        <DocumentTabs />
        <Toolbars />
        <main className="flex min-h-0 flex-1">
          <aside className="w-[27px] shrink-0 pr-0.5 pl-[3px]">
            <div className="flex flex-col items-center rounded bg-linear-to-r from-[#fdfdfd] to-[#f0f0f0] pb-1">
              <Grip vertical className="mt-1.5 mb-[3px]" />
              <ToolGroups vertical groups={[drawTools]} />
            </div>
          </aside>
          <div className="flex min-w-0 flex-1 flex-col">
            <Drawing />
            <ModelTabs />
          </div>
          <aside className="w-[27px] shrink-0 bg-[#fdfdfd] pr-0.5">
            <div className="flex flex-col items-center rounded bg-linear-to-r from-[#fdfdfd] to-[#f0f0f0] pb-1">
              <Grip vertical className="mt-1.5 mb-[3px]" />
              <ToolGroups vertical groups={[modifyTools, dimTools, editDimTools, orderTools]} />
            </div>
          </aside>
        </main>
        <CommandPanel />
        <StatusBar />
      </div>
    </div>
  );
}
